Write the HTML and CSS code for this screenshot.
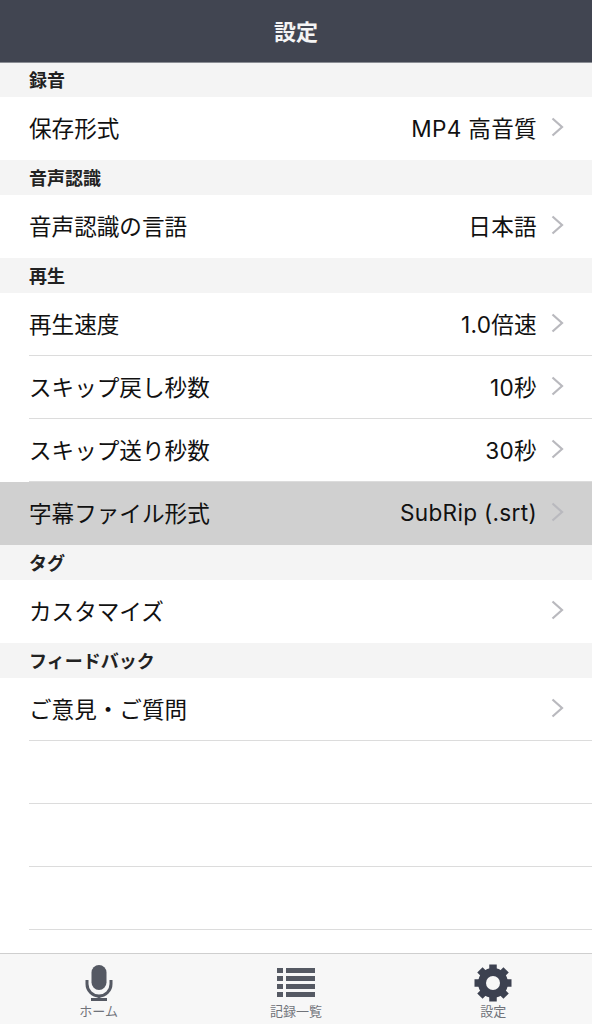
FILE: index.html
```html
<!DOCTYPE html>
<html lang="ja">
<head>
    <meta charset="UTF-8">
    <meta name="viewport" content="width=device-width, initial-scale=1.0">
    <title>設定</title>
    <link rel="stylesheet" href="styles.css">
</head>
<body>
    <main class="screen">
        <header class="nav-bar">設定</header>
        <div class="settings">
            <div class="section-title">録音</div>
            <div class="row no-line">
                <span>保存形式</span>
                <span class="value">MP4 高音質</span>
                <svg class="chevron" viewBox="0 0 13 20"><path d="M1.5 1.5 L11 10 L1.5 18.5"/></svg>
            </div>
            <div class="section-title">音声認識</div>
            <div class="row no-line">
                <span>音声認識の言語</span>
                <span class="value">日本語</span>
                <svg class="chevron" viewBox="0 0 13 20"><path d="M1.5 1.5 L11 10 L1.5 18.5"/></svg>
            </div>
            <div class="section-title">再生</div>
            <div class="row">
                <span>再生速度</span>
                <span class="value">1.0倍速</span>
                <svg class="chevron" viewBox="0 0 13 20"><path d="M1.5 1.5 L11 10 L1.5 18.5"/></svg>
            </div>
            <div class="row">
                <span>スキップ戻し秒数</span>
                <span class="value">10秒</span>
                <svg class="chevron" viewBox="0 0 13 20"><path d="M1.5 1.5 L11 10 L1.5 18.5"/></svg>
            </div>
            <div class="row">
                <span>スキップ送り秒数</span>
                <span class="value">30秒</span>
                <svg class="chevron" viewBox="0 0 13 20"><path d="M1.5 1.5 L11 10 L1.5 18.5"/></svg>
            </div>
            <div class="row no-line selected">
                <span>字幕ファイル形式</span>
                <span class="value">SubRip (.srt)</span>
                <svg class="chevron" viewBox="0 0 13 20"><path d="M1.5 1.5 L11 10 L1.5 18.5"/></svg>
            </div>
            <div class="section-title">タグ</div>
            <div class="row no-line">
                <span>カスタマイズ</span>
                <span class="value"></span>
                <svg class="chevron" viewBox="0 0 13 20"><path d="M1.5 1.5 L11 10 L1.5 18.5"/></svg>
            </div>
            <div class="section-title">フィードバック</div>
            <div class="row">
                <span>ご意見・ご質問</span>
                <span class="value"></span>
                <svg class="chevron" viewBox="0 0 13 20"><path d="M1.5 1.5 L11 10 L1.5 18.5"/></svg>
            </div>
            <div class="row"></div>
            <div class="row"></div>
            <div class="row"></div>
        </div>
        <nav class="tab-bar">
            <div class="tab">
                <svg class="tab-icon" viewBox="0 0 40 40">
                    <rect x="12.5" y="2" width="15" height="25" rx="7.5" fill="#555963"/>
                    <path d="M8 17 V21 A12 12 0 0 0 32 21 V17 M20 33 V37 M12 36.5 H28" fill="none" stroke="#555963" stroke-width="3"/>
                </svg>
                <span>ホーム</span>
            </div>
            <div class="tab">
                <svg class="tab-icon" viewBox="0 0 40 40" fill="#555963">
                    <rect x="1" y="5" width="6" height="5"/><rect x="10" y="5" width="29" height="5"/>
                    <rect x="1" y="13" width="6" height="5"/><rect x="10" y="13" width="29" height="5"/>
                    <rect x="1" y="21" width="6" height="5"/><rect x="10" y="21" width="29" height="5"/>
                    <rect x="1" y="29" width="6" height="5"/><rect x="10" y="29" width="29" height="5"/>
                </svg>
                <span>記録一覧</span>
            </div>
            <div class="tab">
                <svg class="tab-icon" viewBox="0 0 40 40">
                    <circle cx="20" cy="20" r="10.5" fill="none" stroke="#3c4150" stroke-width="9"/>
                    <g stroke="#3c4150" stroke-width="7.5">
                        <path d="M20 1.5 V38.5"/>
                        <path d="M1.5 20 H38.5"/>
                        <path d="M6.9 6.9 L33.1 33.1"/>
                        <path d="M33.1 6.9 L6.9 33.1"/>
                    </g>
                    <circle cx="20" cy="20" r="7" fill="#f7f7f7"/>
                </svg>
                <span>設定</span>
            </div>
        </nav>
    </main>
</body>
</html>
```

FILE: styles.css
```css
body {
    font-family: Inter, "Noto Sans CJK JP", sans-serif;
    margin: 0;
    padding: 0;
    background-color: white;
    color: #111;
}
.screen {
    display: flex;
    flex-direction: column;
    height: 1024px;
    overflow: hidden;
}
.nav-bar {
    height: 60px;
    flex-shrink: 0;
    display: flex;
    align-items: center;
    justify-content: center;
    padding-bottom: 2px;
    background-color: #414551;
    border-bottom: 1px solid #8a8d94;
    color: #f4f4f4;
    font-size: 22px;
    font-weight: bold;
}
.settings {
    flex: 1;
}
.section-title {
    height: 35px;
    box-sizing: border-box;
    padding: 0 0 2px 29px;
    display: flex;
    align-items: center;
    background-color: #f4f4f4;
    font-size: 18px;
    font-weight: bold;
    color: #222;
}
.section-title:first-child {
    height: 34px;
}
.row {
    position: relative;
    height: 63px;
    box-sizing: border-box;
    padding: 0 28px 3px 29px;
    display: flex;
    align-items: center;
    font-size: 22.6px;
}
.row::after {
    content: "";
    position: absolute;
    left: 29px;
    right: 0;
    bottom: 0;
    height: 1px;
    background-color: #dcdcdc;
}
.no-line::after {
    display: none;
}
.selected {
    background-color: #d0d0d0;
}
.value {
    margin-left: auto;
    letter-spacing: 0.3px;
}
.chevron {
    width: 13px;
    height: 20px;
    margin-left: 14px;
    fill: none;
    stroke: #b9b9be;
    stroke-width: 2.2;
}
.tab-bar {
    height: 71px;
    flex-shrink: 0;
    box-sizing: border-box;
    display: flex;
    background-color: #f7f7f7;
    border-top: 1px solid #cfcfcf;
}
.tab {
    flex: 1;
    display: flex;
    flex-direction: column;
    align-items: center;
    padding-top: 9px;
    font-size: 13px;
    line-height: 16px;
    color: #70737a;
}
.tab-icon {
    width: 40px;
    height: 40px;
}
```
